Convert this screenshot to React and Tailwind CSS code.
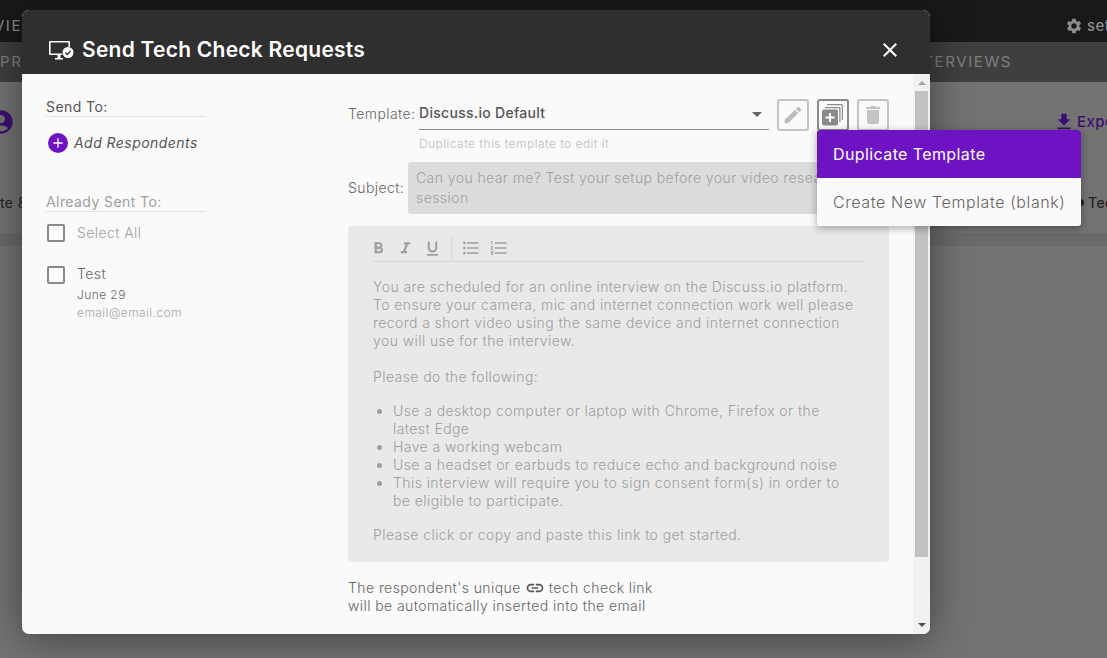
import React from 'react';
import {
  MdEdit, MdDelete, MdLink, MdFormatBold, MdFormatItalic, MdFormatUnderlined,
  MdFormatListBulleted, MdFormatListNumbered, MdFileDownload, MdSettings, MdClose, MdAccountCircle, MdAdd, MdArrowDropDown,
} from 'react-icons/md';

const bullets = [
  'Use a desktop computer or laptop with Chrome, Firefox or the latest Edge',
  'Have a working webcam',
  'Use a headset or earbuds to reduce echo and background noise',
  'This interview will require you to sign consent form(s) in order to be eligible to participate.',
];

const MonitorCheck = () => (
  <svg width="26" height="20" viewBox="0 0 26 20" className="shrink-0">
    <path d="M2 1h19a1 1 0 0 1 1 1v5h-1.6V2.6H2.6v10.8H14V15H2a1 1 0 0 1-1-1V2a1 1 0 0 1 1-1z" fill="#fff" />
    <path d="M7 18h8v1.4H7zM9.5 15h3v3h-3z" fill="#fff" />
    <circle cx="20" cy="12.5" r="5.5" fill="#fff" />
    <path d="M17.4 12.6l1.9 1.9 3.3-3.6" stroke="#2f2f2f" strokeWidth="1.4" fill="none" />
  </svg>
);

const DuplicateIcon = () => (
  <svg width="24" height="24" viewBox="0 0 24 24">
    <path d="M6 1h14a2 2 0 0 1 2 2v14h-1.2V3a.8.8 0 0 0-.8-.8H6z" fill="#8a8a8a" />
    <path d="M4 4h14a1.5 1.5 0 0 1 1.5 1.500V19h-1.200V5.500a.3.3 0 0 0-.3-.3H4z" fill="#8a8a8a" />
    <rect x="1" y="6.500" width="16" height="16" rx="2" fill="#8a8a8a" />
    <path d="M8 10h2v3.500h3.500v2H10V19H8v-3.500H4.500v-2H8z" fill="#fff" />
  </svg>
);

const Checkbox = () => <span className="block h-[18px] w-[18px] shrink-0 rounded-[2px] border-2 border-[#8a8a8a]" />;

const ToolButton = ({ children, dark }) => (
  <button className={`flex h-8 w-8 items-center justify-center rounded-[3px] border-2 ${dark ? 'border-[#8a8a8a]' : 'border-[#c4c4c4]'}`}>
    {children}
  </button>
);

export default function App() {
  return (
    <div className="relative h-[658px] w-[1107px] overflow-hidden bg-[#737373] font-['Inter','Liberation_Sans',sans-serif] font-light tracking-[0.42px] text-[#5c5c5c]">
      {/* page behind the dialog */}
      <div className="flex h-[42px] items-center justify-between bg-[#191919] pt-[10px] text-[15px] text-[#8a8a8a]">
        <span className="ml-[-6px] font-normal tracking-[1.5px]">VIEW</span>
        <span className="flex items-center gap-[4px] text-[#8c8c8c]">
          <MdSettings size={18} />
          <span className="w-[20px] overflow-hidden font-medium">settings</span>
        </span>
      </div>
      <div className="flex h-[40px] items-center justify-between bg-[#3f3f3f] text-[15px] font-normal tracking-[1.6px] text-[#808080]">
        <span>PR</span>
        <span className="pr-[95px]">INTERVIEWS</span>
      </div>
      <div className="flex h-[80px] items-center justify-between text-[#3d0f70]">
        <MdAccountCircle size={28} className="ml-[-13px]" />
        <span className="flex items-center gap-[2px] text-[15px] font-medium">
          <MdFileDownload size={22} />
          <span className="w-[30px] overflow-hidden">Export</span>
        </span>
      </div>
      <div className="mt-[30px] flex h-5 items-center justify-between text-[14px] font-normal text-[#222]">
        <span>te &amp;</span>
        <span className="flex items-center gap-[4px] font-medium">
          <span className="h-[7px] w-[7px] rounded-full bg-[#222]" />
          <span className="w-[19px] overflow-hidden">Tech</span>
        </span>
      </div>
      <div className="mt-[21px] h-[13px] bg-[#6a6a6a]" />

      {/* dialog */}
      <div className="absolute left-[22px] top-[10px] flex h-[624px] w-[908px] flex-col overflow-hidden rounded-[7px] bg-[#fafafa] shadow-[0_4px_40px_rgba(0,0,0,0.45)]">
        <div className="flex h-16 shrink-0 items-center justify-between bg-[#2f2f2f] pl-[26px] pr-[31px] pt-[16px]">
          <h2 className="flex items-center gap-[8px] text-[21px] font-semibold tracking-[0.25px] text-white">
            <MonitorCheck />
            Send Tech Check Requests
          </h2>
          <MdClose size={24} className="-mr-[3px] text-white" />
        </div>

        <div className="flex min-h-0 flex-1">
          <div className="flex min-w-0 flex-1 pl-6">
            {/* recipients */}
            <div className="w-[160px] shrink-0 pt-[24px] text-[14px]">
              <div className="border-b border-[#e3e3e3] leading-[18px] font-normal text-[#555]">Send To:</div>
              <div className="mt-[15px] flex items-center gap-[6px] pl-[2px] font-normal italic tracking-[0.45px] text-[#555]">
                <span className="flex h-5 w-5 items-center justify-center rounded-full bg-[#6d13c4] text-white">
                  <MdAdd size={16} />
                </span>
                Add Respondents
              </div>
              <div className="mt-[40px] border-b border-[#e3e3e3] leading-[18px] font-normal text-[#a0a0a0]">Already Sent To:</div>
              <div className="mt-[11px] flex items-center gap-[12px] pl-[1px] text-[#a0a0a0]">
                <Checkbox />
                <span className="-mt-[1px]">Select All</span>
              </div>
              <div className="mt-[23px] flex gap-[12px] pl-[1px]">
                <Checkbox />
                <div className="-mt-[1px]">
                  <div className="leading-[18px] text-[#666]">Test</div>
                  <div className="mt-[4px] text-[12px] leading-[16px] text-[#666]">June 29</div>
                  <div className="mt-[2px] text-[12px] leading-[16px] text-[#a5a5a5]">email@email.com</div>
                </div>
              </div>
            </div>

            {/* template form */}
            <div className="ml-[142px] w-[541px] shrink-0 pt-[25px] text-[14px]">
              <div className="flex items-start">
                <span className="w-[71px] pt-[6px] leading-[18px] text-[#666]">Template:</span>
                <div className="w-[350px]">
                  <div className="flex h-[31px] items-center justify-between border-b border-[#8a8a8a] pb-[3px] font-medium tracking-[0.3px] text-[#555]">
                    Discuss.io Default
                    <MdArrowDropDown size={24} className="mr-0 mt-[3px] text-[#666]" />
                  </div>
                  <div className="mt-[6px] text-[12px] leading-[16px] tracking-[0.46px] text-[#bdbdbd]">Duplicate this template to edit it</div>
                </div>
                <div className="ml-2 flex gap-2">
                  <ToolButton><MdEdit size={22} className="text-[#bdbdbd]" /></ToolButton>
                  <ToolButton dark><DuplicateIcon /></ToolButton>
                  <ToolButton><MdDelete size={24} className="text-[#c4c4c4]" /></ToolButton>
                </div>
              </div>

              <div className="mt-[10px] flex items-center">
                <span className="w-[60px] leading-[18px] text-[#666]">Subject:</span>
                <div className="w-[481px] rounded-[3px] bg-[#dcdcdc] px-2 py-[6px] leading-[20px] text-[#a0a0a0]">
                  Can you hear me? Test your setup before your video research session
                </div>
              </div>

              <div className="mt-3 h-[336px] rounded-[4px] bg-[#e9e9e9] px-[25px] pt-[8px] text-[#9e9e9e]">
                <div className="flex h-[28px] items-center border-b border-[#d8d8d8] pt-[1px]">
                  <MdFormatBold size={19} className="-ml-[4px]" />
                  <MdFormatItalic size={19} className="ml-[8px]" />
                  <MdFormatUnderlined size={19} className="ml-[8px]" />
                  <span className="ml-[9px] h-[27px] w-px bg-[#d8d8d8]" />
                  <MdFormatListBulleted size={20} className="ml-[9px]" />
                  <MdFormatListNumbered size={20} className="ml-[8px]" />
                </div>
                <div className="pt-[16px] leading-[18px]">
                  <p>You are scheduled for an online interview on the Discuss.io platform. To ensure your camera, mic and internet connection work well please record a short video using the same device and internet connection you will use for the interview.</p>
                  <p className="mt-[18px]">Please do the following:</p>
                  <ul className="mt-[16px] list-disc pl-[20px] pr-[20px]">
                    {bullets.map((text) => <li key={text}>{text}</li>)}
                  </ul>
                  <p className="mt-[16px]">Please click or copy and paste this link to get started.</p>
                </div>
              </div>

              <div className="mt-[17px] leading-[18px] text-[#666]">
                <div className="flex h-[18px] items-center gap-[4px]">The respondent's unique <MdLink size={20} className="text-[#555]" /> tech check link</div>
                <div>will be automatically inserted into the email</div>
              </div>
            </div>
          </div>

          {/* scrollbar */}
          <div className="flex w-[17px] shrink-0 flex-col items-center bg-[#f1f1f1] text-[#a3a3a3]">
            <span className="mt-[7px] h-0 w-0 border-x-[4px] border-b-[4px] border-x-transparent border-b-[#a3a3a3]" />
            <span className="mt-[6px] h-[466px] w-[13px] bg-[#c1c1c1]" />
            <span className="mt-auto mb-[7px] h-0 w-0 border-x-[4px] border-t-[4px] border-x-transparent border-t-[#505050]" />
          </div>
        </div>
      </div>

      {/* template menu */}
      <div className="absolute left-[817px] top-[130px] w-[264px] overflow-hidden rounded-[3px] bg-[#fafafa] text-[16px] tracking-[0.6px] shadow-[0_2px_8px_rgba(0,0,0,0.35)]">
        <div className="flex h-12 items-center bg-[#6d13c4] px-4 pb-[1px] font-normal tracking-[0.4px] text-white">Duplicate Template</div>
        <div className="flex h-12 items-center whitespace-nowrap pl-4 pb-[1px] text-[#666]">Create New Template (blank)</div>
      </div>
    </div>
  );
}
